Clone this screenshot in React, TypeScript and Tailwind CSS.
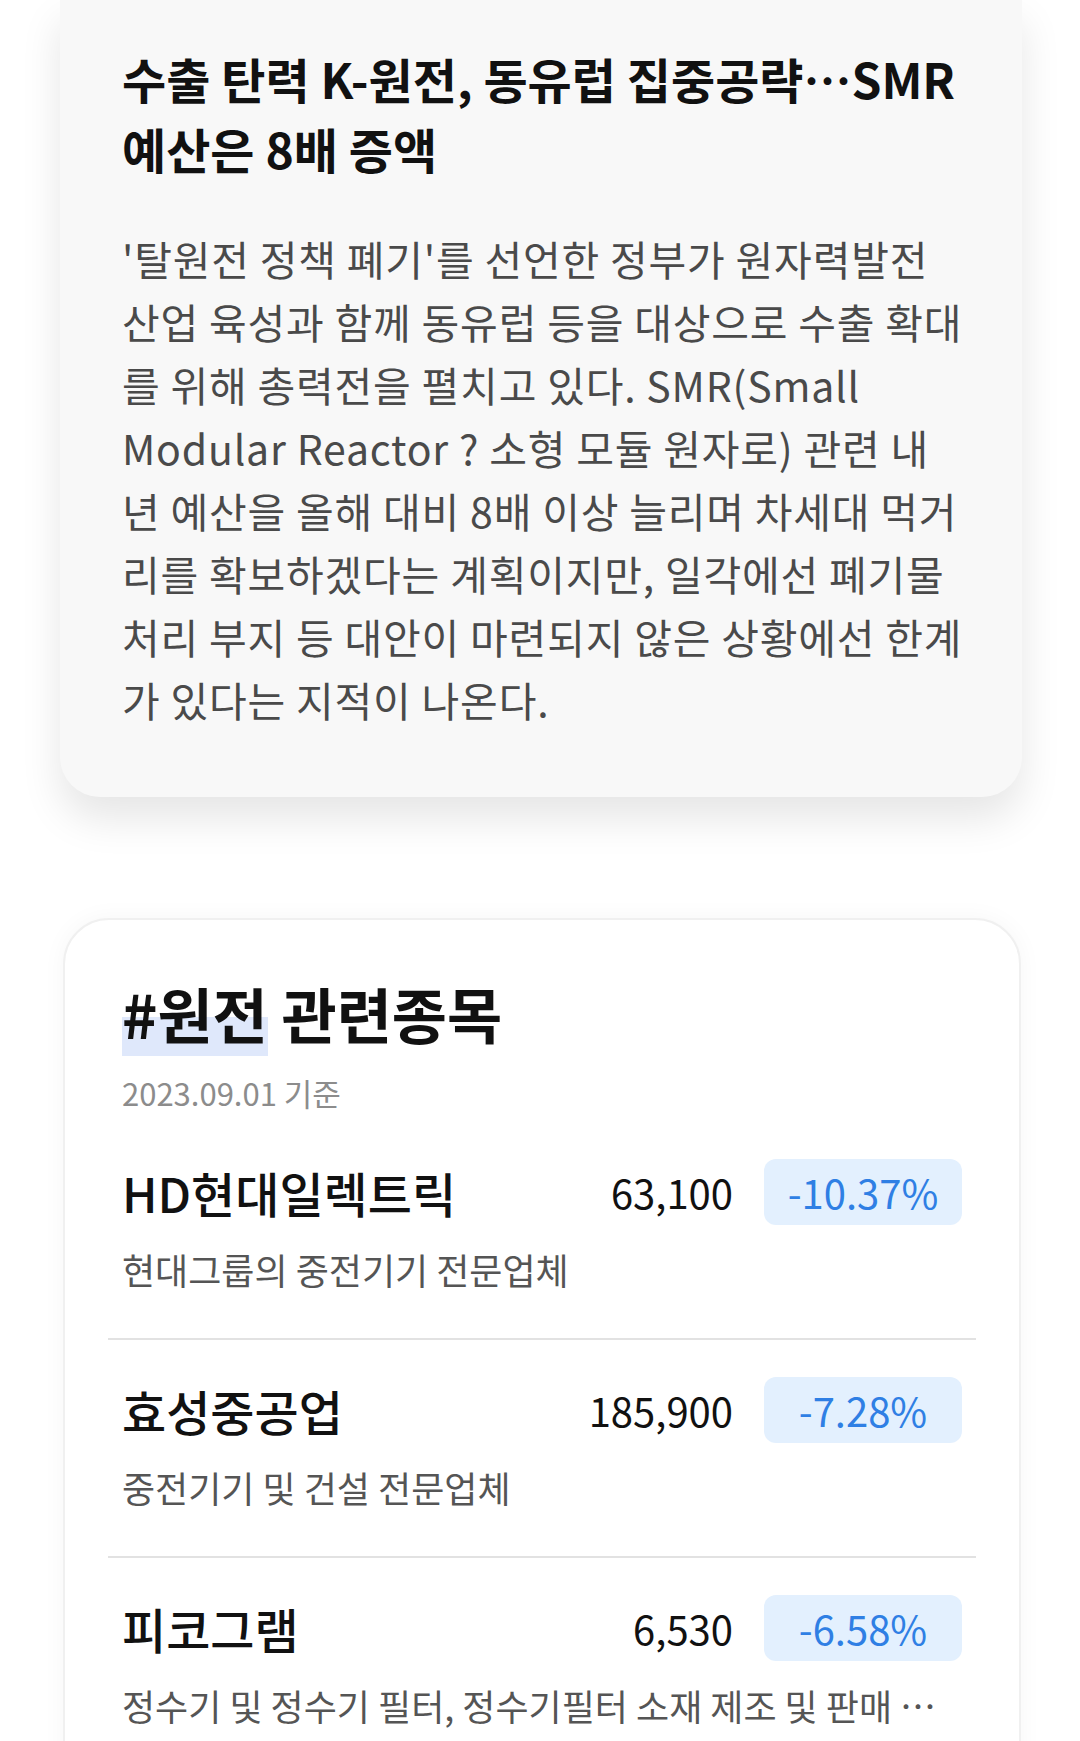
import React from 'react';

const stocks = [
  { name: 'HD현대일렉트릭', price: '63,100', rate: '-10.37%', desc: '현대그룹의 중전기기 전문업체' },
  { name: '효성중공업', price: '185,900', rate: '-7.28%', desc: '중전기기 및 건설 전문업체' },
  { name: '피코그램', price: '6,530', rate: '-6.58%', desc: '정수기 및 정수기 필터, 정수기필터 소재 제조 및 판매 …' },
];

const bodyLines = [
  "'탈원전 정책 폐기'를 선언한 정부가 원자력발전",
  '산업 육성과 함께 동유럽 등을 대상으로 수출 확대',
  '를 위해 총력전을 펼치고 있다. SMR(Small',
  'Modular Reactor ? 소형 모듈 원자로) 관련 내',
  '년 예산을 올해 대비 8배 이상 늘리며 차세대 먹거',
  '리를 확보하겠다는 계획이지만, 일각에선 폐기물',
  '처리 부지 등 대안이 마련되지 않은 상황에선 한계',
  '가 있다는 지적이 나온다.',
];

const font = { fontFamily: '"Noto Sans CJK KR", "Noto Sans", sans-serif' };

export default function App() {
  return (
    <div className="w-[1080px] h-[1741px] overflow-hidden bg-white" style={font}>
      {/* Article summary card */}
      <div className="ml-[60px] mr-[58px] bg-[#f8f8f8] rounded-b-[40px] shadow-[0_22px_40px_rgba(0,0,0,0.1)] pl-[62px] pr-[30px] pt-[43px] pb-[66px]">
        <h1 className="text-[48px] font-bold leading-[70px] text-[#111] whitespace-nowrap">
          <span className="block">수출 탄력 K-원전, 동유럽 집중공략…SMR</span>
          <span className="block">예산은 8배 증액</span>
        </h1>
        <p className="mt-[44px] text-[41px] leading-[63px] tracking-[0.8px] text-[#4a4a4a] whitespace-nowrap">
          {bodyLines.map((l) => (
            <span key={l} className="block">{l}</span>
          ))}
        </p>
      </div>

      {/* Related stocks card */}
      <div className="mt-[121px] ml-[63px] mr-[59px] bg-white border-2 border-[#f0f0f0] rounded-[46px] shadow-[0_0_24px_rgba(0,0,0,0.04)] px-[57px] pt-[58px] pb-[40px]">
        <h2 className="text-[60px] font-bold leading-[70px] text-[#111]">
          <span className="bg-[linear-gradient(transparent_55%,#dfe8fb_55%)]">#원전</span> 관련종목
        </h2>
        <div className="mt-[25px] text-[31px] leading-[40px] text-[#8c8c8c]">2023.09.01 기준</div>

        <div className="mt-[46px]">
          {stocks.map((s, i) => (
            <div key={s.name}>
              {i > 0 && <div className="-mx-[14px] h-[2px] bg-[#e2e2e2] mb-[37px]" />}
              <div className="flex items-center">
                <div className="flex-1 text-[48px] font-medium text-[#111] leading-[66px]">{s.name}</div>
                <div className="text-[40px] text-[#111] leading-[66px]">{s.price}</div>
                <div className="ml-[31px] w-[198px] h-[66px] rounded-[12px] bg-[#e3f0fe] flex items-center justify-center text-[40px] text-[#2f7fe4]">
                  {s.rate}
                </div>
              </div>
              <div className="mt-[21px] text-[36px] leading-[46px] text-[#555] whitespace-nowrap">
                {s.desc}
              </div>
              <div className="h-[46px]" />
            </div>
          ))}
        </div>
      </div>
    </div>
  );
}
